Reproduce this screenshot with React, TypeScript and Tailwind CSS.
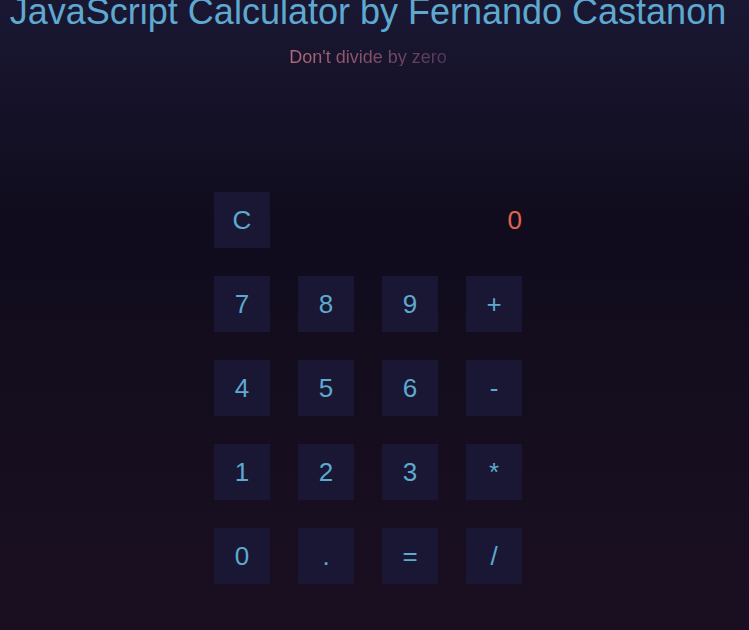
import React from "react";

const rows = [
  ["7", "8", "9", "+"],
  ["4", "5", "6", "-"],
  ["1", "2", "3", "*"],
  ["0", ".", "=", "/"],
];

function Key({ label }: { label: string }) {
  return (
    <div className="w-[56px] h-[56px] bg-[#191734] flex items-center justify-center text-[26px] text-[#5ea9cf]">
      {label}
    </div>
  );
}

export default function App() {
  return (
    <div
      className="w-full h-[630px] overflow-hidden bg-gradient-to-b from-[#1a1733] via-[#100c1d] via-35% to-[#1a0f20]"
      style={{ fontFamily: '"Liberation Sans", Arial, sans-serif' }}
    >
      <div className="w-[736px] flex flex-col items-center">
        <h1 className="text-[36px] leading-none mt-[-6px] text-[#5ea9cf] whitespace-nowrap">
          JavaScript Calculator by Fernando Castanon
        </h1>
        <p className="mt-[18px] text-[18px] leading-none bg-gradient-to-r from-[#b46a76] to-[#553656] bg-clip-text text-transparent">
          Don't divide by zero
        </p>
        <div className="mt-[126px] flex flex-col gap-[28px]">
          <div className="flex items-center justify-between w-[308px]">
            <Key label="C" />
            <div className="text-[26px] text-[#e0654f]">0</div>
          </div>
          {rows.map((r, i) => (
            <div key={i} className="flex gap-[28px]">
              {r.map((k) => (
                <Key key={k} label={k} />
              ))}
            </div>
          ))}
        </div>
      </div>
    </div>
  );
}
